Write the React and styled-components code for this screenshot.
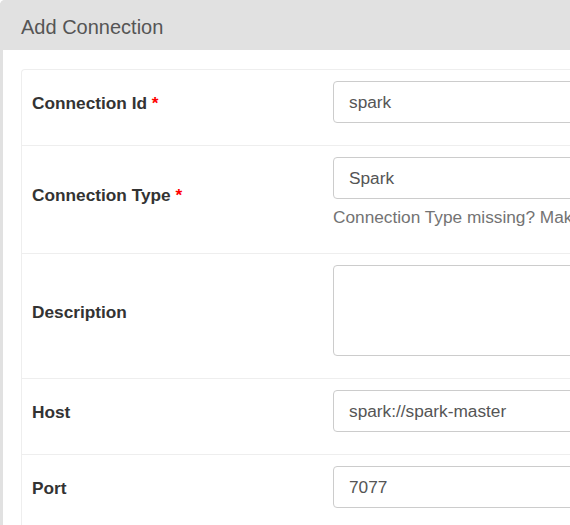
import React from "react";
import styled, { createGlobalStyle } from "styled-components";

const fields = [
  { label: "Connection Id", required: true, value: "spark" },
  {
    label: "Connection Type",
    required: true,
    value: "Spark",
    help: "Connection Type missing? Make sure you have installed the corresponding provider.",
  },
  { label: "Description", multiline: true, value: "" },
  { label: "Host", value: "spark://spark-master" },
  { label: "Port", value: "7077" },
];

const App = () => {
  return (
    <>
      <GlobalStyle />
      <StyledPanel>
        <StyledHeading>Add Connection</StyledHeading>
        <StyledBody>
          <StyledTable>
            {fields.map((field, idx) => (
              <StyledRow key={idx}>
                <StyledLabel>
                  {field.label}
                  {field.required && <StyledRequired> *</StyledRequired>}
                </StyledLabel>
                <StyledField>
                  {field.multiline ? (
                    <StyledTextarea defaultValue={field.value} />
                  ) : (
                    <StyledInput defaultValue={field.value} />
                  )}
                  {field.help && <StyledHelp>{field.help}</StyledHelp>}
                </StyledField>
              </StyledRow>
            ))}
          </StyledTable>
        </StyledBody>
      </StyledPanel>
    </>
  );
};

const GlobalStyle = createGlobalStyle`
  html, body {
    margin: 0;
    padding: 0;
    background: #fff;
    overflow: hidden;
  }
  body {
    font-family: "Liberation Sans", Arial, sans-serif;
    color: #333;
  }
`;

const StyledPanel = styled.div`
  width: 1000px;
  border: 3px solid #e1e1e1;
  border-top: 0;
  border-right: 0;
  border-radius: 5px 0 0 0;
  background: #fff;
`;

const StyledHeading = styled.div`
  box-sizing: border-box;
  height: 50px;
  line-height: 50px;
  margin-left: -3px;
  padding: 2px 21px 0;
  background: #e1e1e1;
  border-radius: 5px 0 0 0;
  font-size: 20px;
  color: #555;
`;

const StyledBody = styled.div`
  padding: 19px 0 0 18px;
`;

const StyledTable = styled.div`
  border: 1px solid #eee;
  border-right: 0;
  border-radius: 4px 0 0 0;
`;

const StyledRow = styled.div`
  display: grid;
  grid-template-columns: 311px 1fr;
  & + & {
    border-top: 1px solid #eee;
  }
`;

const StyledLabel = styled.div`
  align-self: center;
  padding: 0 0 8px 10px;
  font-size: 17.25px;
  font-weight: bold;
  color: #333;
`;

const StyledRequired = styled.span`
  color: #f00;
`;

const StyledField = styled.div`
  padding: 11px 0 22px;
`;

const StyledInput = styled.input`
  display: block;
  box-sizing: border-box;
  width: 600px;
  height: 42px;
  padding: 0 15px;
  border: 1px solid #ccc;
  border-radius: 4px;
  font-family: "Liberation Sans", Arial, sans-serif;
  font-size: 17.25px;
  color: #555;
  outline: none;
`;

const StyledTextarea = styled.textarea`
  display: block;
  box-sizing: border-box;
  width: 600px;
  height: 91px;
  padding: 8px 15px;
  border: 1px solid #ccc;
  border-radius: 4px;
  font-family: "Liberation Sans", Arial, sans-serif;
  font-size: 17.25px;
  color: #555;
  resize: none;
  outline: none;
`;

const StyledHelp = styled.div`
  margin: 6px 0 2px;
  font-size: 17.25px;
  line-height: 24px;
  color: #737373;
  white-space: nowrap;
`;

export default App;
